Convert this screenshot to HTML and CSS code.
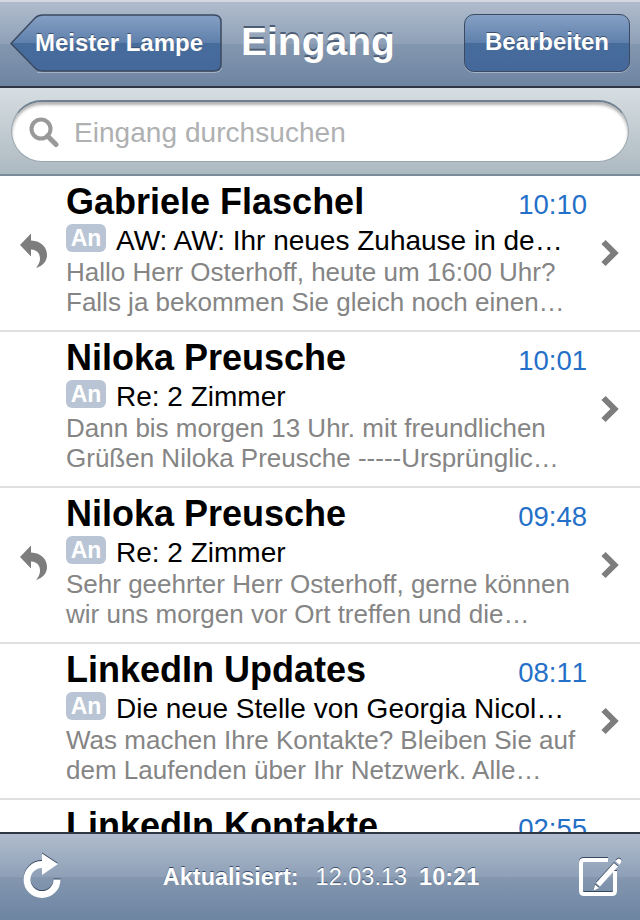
FILE: index.html
```html
<!DOCTYPE html>
<html lang="de">

<head>
  <meta charset="UTF-8">
  <title>Eingang</title>
  <link rel="stylesheet" href="styles.css">
</head>

<body>
  <div class="screen">
    <header class="nav-bar">
      <a class="nav-back">
        <svg class="nav-back-shape" width="212" height="60" viewBox="0 0 212 60">
          <defs>
            <linearGradient id="back-fill" x1="0" y1="0" x2="0" y2="1">
              <stop offset="0" stop-color="#86a0c4"/>
              <stop offset="0.5" stop-color="#5e80ac"/>
              <stop offset="0.5" stop-color="#466c9c"/>
              <stop offset="1" stop-color="#44689a"/>
            </linearGradient>
          </defs>
          <path d="M1 29.5 L25 4 Q28 1 33 1 H204 Q211 1 211 8 V50 Q211 57 204 57 H33 Q28 57 25 54 Z" fill="url(#back-fill)" stroke="#3b4a60" stroke-width="1.5"/>
          <path d="M27 58.5 H204 Q210 58.5 212 54" fill="none" stroke="#a3b2c6" stroke-width="1"/>
        </svg>
        <span class="nav-back-label">Meister Lampe</span>
      </a>
      <h1 class="nav-title">Eingang</h1>
      <a class="nav-edit">Bearbeiten</a>
    </header>

    <div class="search-bar">
      <div class="search-field">
        <svg class="search-icon" width="30" height="32" viewBox="0 0 30 32">
          <circle cx="12" cy="12" r="9.5" fill="none" stroke="#999" stroke-width="4"/>
          <path d="M18.5 19 L27 27.5" stroke="#999" stroke-width="5" stroke-linecap="round"/>
        </svg>
        <span class="search-placeholder">Eingang durchsuchen</span>
      </div>
    </div>

    <main class="mail-list">
      <div class="mail-row">
        <div class="mail-status">
          <svg class="reply-icon" width="28" height="36" viewBox="0 0 28 36">
            <path d="M0 12 L11 0.5 V7.5 C21 8 27 14 27 22 C27 28 23 33 16 35 C20 30 21 26 19 21 C17.5 18 14.5 16.5 11 16.5 V23.5 Z" fill="#7d7d7d"/>
          </svg>
        </div>
        <div class="mail-body">
          <div class="mail-top">
            <span class="mail-sender">Gabriele Flaschel</span>
            <span class="mail-time">10:10</span>
          </div>
          <div class="mail-subject-line">
            <span class="badge">An</span>
            <span class="mail-subject">AW: AW: Ihr neues Zuhause in de…</span>
          </div>
          <p class="mail-preview">Hallo Herr Osterhoff, heute um 16:00 Uhr?</p>
          <p class="mail-preview">Falls ja bekommen Sie gleich noch einen…</p>
        </div>
        <div class="mail-chevron">
          <svg width="20" height="28" viewBox="0 0 20 28">
            <path d="M3.5 3 L14.5 14 L3.5 25" fill="none" stroke="#7d7d7d" stroke-width="6"/>
          </svg>
        </div>
      </div>

      <div class="mail-row">
        <div class="mail-status"></div>
        <div class="mail-body">
          <div class="mail-top">
            <span class="mail-sender">Niloka Preusche</span>
            <span class="mail-time">10:01</span>
          </div>
          <div class="mail-subject-line">
            <span class="badge">An</span>
            <span class="mail-subject">Re: 2 Zimmer</span>
          </div>
          <p class="mail-preview">Dann bis morgen 13 Uhr. mit freundlichen</p>
          <p class="mail-preview">Grüßen Niloka Preusche -----Ursprünglic…</p>
        </div>
        <div class="mail-chevron">
          <svg width="20" height="28" viewBox="0 0 20 28">
            <path d="M3.5 3 L14.5 14 L3.5 25" fill="none" stroke="#7d7d7d" stroke-width="6"/>
          </svg>
        </div>
      </div>

      <div class="mail-row">
        <div class="mail-status">
          <svg class="reply-icon" width="28" height="36" viewBox="0 0 28 36">
            <path d="M0 12 L11 0.5 V7.5 C21 8 27 14 27 22 C27 28 23 33 16 35 C20 30 21 26 19 21 C17.5 18 14.5 16.5 11 16.5 V23.5 Z" fill="#7d7d7d"/>
          </svg>
        </div>
        <div class="mail-body">
          <div class="mail-top">
            <span class="mail-sender">Niloka Preusche</span>
            <span class="mail-time">09:48</span>
          </div>
          <div class="mail-subject-line">
            <span class="badge">An</span>
            <span class="mail-subject">Re: 2 Zimmer</span>
          </div>
          <p class="mail-preview">Sehr geehrter Herr Osterhoff, gerne können</p>
          <p class="mail-preview">wir uns morgen vor Ort treffen und die…</p>
        </div>
        <div class="mail-chevron">
          <svg width="20" height="28" viewBox="0 0 20 28">
            <path d="M3.5 3 L14.5 14 L3.5 25" fill="none" stroke="#7d7d7d" stroke-width="6"/>
          </svg>
        </div>
      </div>

      <div class="mail-row">
        <div class="mail-status"></div>
        <div class="mail-body">
          <div class="mail-top">
            <span class="mail-sender">LinkedIn Updates</span>
            <span class="mail-time">08:11</span>
          </div>
          <div class="mail-subject-line">
            <span class="badge">An</span>
            <span class="mail-subject">Die neue Stelle von Georgia Nicol…</span>
          </div>
          <p class="mail-preview">Was machen Ihre Kontakte? Bleiben Sie auf</p>
          <p class="mail-preview">dem Laufenden über Ihr Netzwerk. Alle…</p>
        </div>
        <div class="mail-chevron">
          <svg width="20" height="28" viewBox="0 0 20 28">
            <path d="M3.5 3 L14.5 14 L3.5 25" fill="none" stroke="#7d7d7d" stroke-width="6"/>
          </svg>
        </div>
      </div>

      <div class="mail-row">
        <div class="mail-status"></div>
        <div class="mail-body">
          <div class="mail-top">
            <span class="mail-sender">LinkedIn Kontakte</span>
            <span class="mail-time">02:55</span>
          </div>
        </div>
        <div class="mail-chevron"></div>
      </div>
    </main>

    <footer class="tool-bar">
      <svg class="tool-icon" width="40" height="48" viewBox="0 0 40 48">
        <path d="M19 11.5 A15 15 0 1 0 34 26.5" fill="none" stroke="#fff" stroke-width="7"/>
        <path d="M19 0.5 L35 11 L19 22 Z" fill="#fff"/>
      </svg>
      <div class="tool-status">
        <b>Aktualisiert:</b>
        <span class="tool-date">12.03.13</span>
        <b>10:21</b>
      </div>
      <svg class="tool-icon" width="44" height="42" viewBox="0 0 44 42">
        <path d="M29 4 H5 Q2 4 2 7 V35 Q2 38 5 38 H33 Q36 38 36 35 V15" fill="none" stroke="#fff" stroke-width="4"/>
        <path d="M17 27 L35 7 L39 10.5 L21 30.5 Z" fill="#fff"/>
        <path d="M36.5 5 L38.5 3 Q40 2 41.5 3.3 Q43 4.8 42 6.5 L40.3 8.8 Z" fill="#fff"/>
        <path d="M16 28.5 L20 32 L14.5 34.5 Z" fill="#fff"/>
      </svg>
    </footer>
  </div>
</body>

</html>
```

FILE: styles.css
```css
* {
  box-sizing: border-box;
}

body {
  margin: 0;
  font-family: "Liberation Sans", Arial, sans-serif;
  background-color: #fff;
}

.screen {
  display: flex;
  flex-direction: column;
  width: 640px;
  height: 920px;
  overflow: hidden;
}

/* top bar */
.nav-bar {
  display: flex;
  align-items: flex-start;
  flex: none;
  height: 88px;
  padding: 12px 10px 0;
  background: linear-gradient(#b0bccd, #8ea0b7 50%, #8497af 50%, #6d84a2);
  border-top: 2px solid #d3d8de;
  border-bottom: 2px solid #2d3642;
}

.nav-back {
  position: relative;
  display: block;
  width: 212px;
  height: 60px;
}

.nav-back-shape {
  position: absolute;
  top: 0;
  left: 0;
}

.nav-back-label {
  position: relative;
  display: block;
  padding: 14px 0 0 25px;
  font-size: 24px;
  line-height: 30px;
  font-weight: bold;
  color: #fff;
  text-shadow: 0 -1px 0 #3b4f6c;
}

.nav-title {
  flex: 1;
  margin: 5px 0 0 19px;
  font-size: 39px;
  line-height: 46px;
  font-weight: bold;
  color: #fff;
  text-shadow: 0 -2px 0 #4d5d74;
}

.nav-edit {
  width: 166px;
  height: 58px;
  border: 1.5px solid #3b4a60;
  border-radius: 10px;
  background: linear-gradient(#86a0c4, #5e80ac 50%, #466c9c 50%, #44689a);
  box-shadow: 0 1px 0 #a3b2c6;
  font-size: 24px;
  line-height: 54px;
  font-weight: bold;
  text-align: center;
  color: #fff;
  text-shadow: 0 -1px 0 #3b4f6c;
}

/* search */
.search-bar {
  flex: none;
  height: 88px;
  padding: 12px 11px 0;
  background: linear-gradient(#d6dee2, #adb9c1);
  border-bottom: 2px solid #7d8c99;
}

.search-field {
  display: flex;
  align-items: center;
  gap: 15px;
  height: 62px;
  padding: 0 0 0 17px;
  background-color: #fff;
  border: 1.5px solid #98a5af;
  border-top: 2px solid #6f7f8d;
  border-radius: 31px;
  box-shadow: inset 0 3px 3px rgba(0, 0, 0, 0.3);
}

.search-icon {
  margin-top: 2px;
}

.search-placeholder {
  padding-top: 3px;
  font-size: 28px;
  letter-spacing: 0.05px;
  color: #aeb0b1;
}

/* message list */
.mail-list {
  flex: 1;
  overflow: hidden;
  background-color: #fff;
}

.mail-row {
  display: flex;
  height: 156px;
  border-bottom: 2px solid #e0e0e0;
}

.mail-status {
  display: flex;
  align-items: center;
  flex: none;
  width: 66px;
  padding: 0 0 4px 20px;
}

.mail-body {
  flex: none;
  width: 521px;
  padding-top: 8px;
}

.mail-top {
  display: flex;
  justify-content: space-between;
  align-items: baseline;
  height: 36px;
}

.mail-sender {
  font-size: 36px;
  line-height: 36px;
  font-weight: bold;
  color: #000;
}

.mail-time {
  font-size: 27.5px;
  font-kerning: none;
  color: #2470c8;
}

.mail-subject-line {
  display: flex;
  align-items: flex-start;
  gap: 10px;
  height: 37px;
  padding-top: 4px;
}

.badge {
  width: 40px;
  height: 28px;
  border-radius: 6px;
  background-color: #b9c5d5;
  font-size: 23px;
  line-height: 28px;
  font-weight: bold;
  text-align: center;
  color: #fff;
}

.mail-subject {
  padding-top: 1px;
  font-size: 28px;
  line-height: 32px;
  color: #000;
}

.mail-preview {
  margin: 0;
  font-size: 26px;
  line-height: 30px;
  color: #858585;
}

.mail-chevron {
  display: flex;
  align-items: center;
  flex: none;
  padding: 0 0 0 13px;
}

/* bottom bar */
.tool-bar {
  display: flex;
  align-items: center;
  justify-content: space-between;
  flex: none;
  height: 88px;
  padding: 0 17px 0 23px;
  background: linear-gradient(#b0bccd, #8ea0b7 50%, #8497af 50%, #6d84a2);
  border-top: 2px solid #2d3642;
}

.tool-icon {
  filter: drop-shadow(0 -1px 0 #36475f);
}

.tool-status {
  display: flex;
  gap: 17px;
  font-size: 23.5px;
  color: #fff;
  text-shadow: 0 -1px 0 #3b4f6c;
}

.tool-date {
  margin-right: -5px;
}
```
